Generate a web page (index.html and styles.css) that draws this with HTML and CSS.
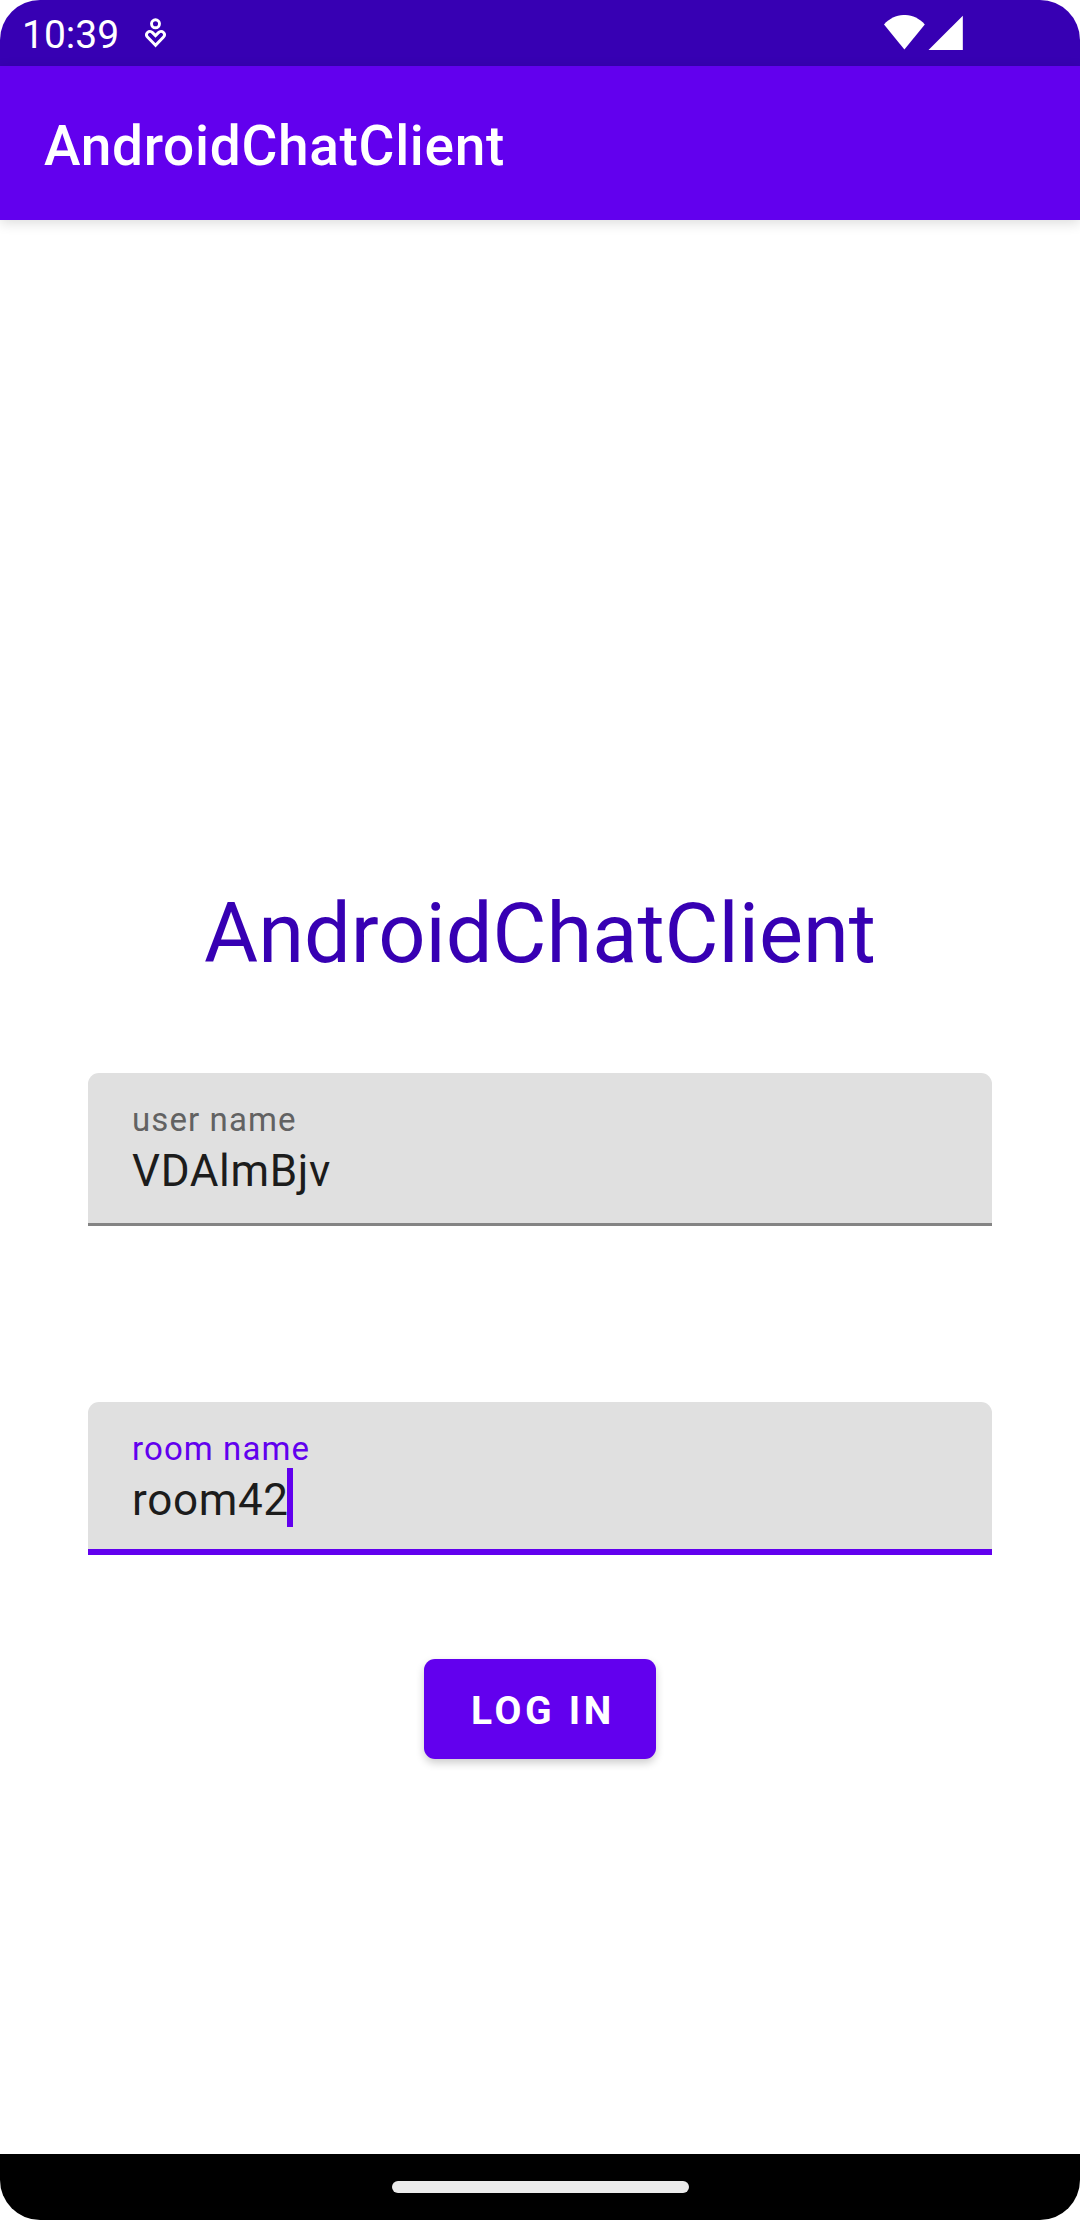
FILE: index.html
```html
<!DOCTYPE html>
<html lang="en">
<head>
<meta charset="utf-8">
<title>AndroidChatClient</title>
<link rel="stylesheet" href="styles.css">
</head>
<body>
<div class="screen">
  <header class="status-bar">
    <span class="clock">10:39</span>
    <svg class="care-icon" width="22" height="30" viewBox="0 0 22 30" fill="none" stroke="#fff" stroke-width="2.900">
      <circle cx="10.500" cy="5.800" r="4"/>
      <path d="M10.500 27.300 2.700 19.300C1.200 17.700 1.200 15.800 2.500 14.500C3.900 13.200 6.100 13.200 7.500 14.600L10.500 17.600 13.500 14.600C14.900 13.200 17.100 13.200 18.500 14.500C19.800 15.800 19.800 17.700 18.300 19.300Z"/>
    </svg>
    <svg class="signal-icons" width="80" height="36" viewBox="0 0 80 36" fill="#fff">
      <path d="M0 9.500C11-3.200 29.800-3.200 40.800 9.500L20.400 34.500Z"/>
      <path d="M44.500 35 78.800.8V35Z"/>
    </svg>
  </header>
  <div class="app-bar"><span class="app-title">AndroidChatClient</span></div>
  <main class="login">
    <h1 class="heading">AndroidChatClient</h1>
    <div class="field">
      <span class="label">user name</span>
      <span class="value">VDAlmBjv</span>
    </div>
    <div class="field focused">
      <span class="label">room name</span>
      <span class="value">room42<i class="caret"></i></span>
    </div>
    <button class="login-button">LOG IN</button>
  </main>
  <footer class="nav-bar"><span class="home-pill"></span></footer>
</div>
</body>
</html>
```
FILE: styles.css
```css
* { box-sizing: border-box; }
body { margin: 0; background: #fff; font-family: Roboto, sans-serif; }
.screen {
  width: 1080px;
  height: 2220px;
  display: flex;
  flex-direction: column;
  overflow: hidden;
  border-radius: 40px;
  background: #fff;
}
.status-bar {
  height: 66px;
  flex: none;
  display: flex;
  align-items: flex-start;
  padding: 0 116px 0 22px;
  background: #3700b3;
  color: #fff;
}
.clock { width: 123px; padding-top: 11px; font-size: 39px; line-height: 48px; }
.care-icon { margin-top: 18px; }
.signal-icons { margin: 15px 0 0 auto; }
.app-bar {
  height: 154px;
  flex: none;
  display: flex;
  align-items: center;
  padding: 6px 44px 0;
  background: #6200ee;
  color: #fff;
  box-shadow: 0 3px 12px rgba(0, 0, 0, .14);
}
.app-title { font-size: 55px; font-weight: 500; line-height: 64px; letter-spacing: .0125em; }
.login {
  flex: 1;
  display: flex;
  flex-direction: column;
  align-items: center;
  padding-top: 665px;
}
.heading {
  margin: 0 0 91px;
  color: #3700b3;
  font-size: 83px;
  font-weight: 400;
  line-height: 97px;
}
.field {
  width: 904px;
  height: 153px;
  display: flex;
  flex-direction: column;
  padding: 27px 44px 0;
  border-bottom: 3px solid #848484;
  border-radius: 11px 11px 0 0;
  background: #e0e0e0;
}
.focused { margin-top: 176px; border-bottom: 6px solid #6200ee; }
.label { color: #626262; font-size: 33px; line-height: 39px; letter-spacing: .0333em; }
.focused .label { color: #6200ee; }
.value {
  display: flex;
  align-items: flex-start;
  color: #1c1c1c;
  font-size: 44px;
  line-height: 64px;
  letter-spacing: .015em;
}
.caret { width: 6px; height: 59px; margin-left: -1.5px; background: #6200ee; }
.login-button {
  width: 232px;
  height: 100px;
  margin-top: 104px;
  padding: 4px 0 0 6px;
  border: 0;
  border-radius: 11px;
  background: #6200ee;
  color: #fff;
  font: 700 39px/46px Roboto, sans-serif;
  letter-spacing: .095em;
  box-shadow: 0 4px 8px rgba(0, 0, 0, .2);
}
.nav-bar {
  height: 66px;
  flex: none;
  display: flex;
  justify-content: center;
  padding-top: 27px;
  background: #000;
}
.home-pill { width: 297px; height: 12px; border-radius: 6px; background: #ebebeb; }
```
